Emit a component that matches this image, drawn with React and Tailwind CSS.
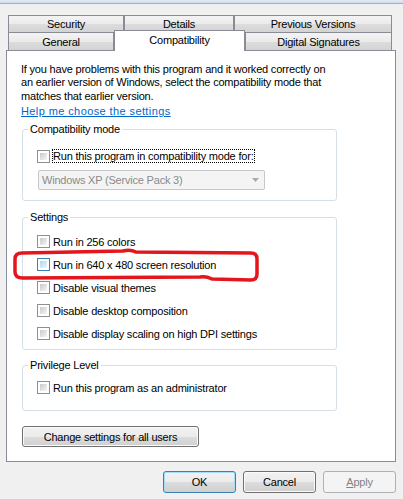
import React from 'react';

// Win7 style checkbox, the hover variant is the light blue one
function Box({ hover }) {
  return (
    <span
      className={
        'block w-[13px] h-[13px] shrink-0 border bg-white p-[2px] ' +
        (hover ? 'border-[#3c7fb1]' : 'border-[#8e8f8f]')
      }
    >
      <span
        className={
          'block w-full h-full ' +
          (hover
            ? 'bg-linear-to-br from-[#b1d6f1] to-[#e9f6fd]'
            : 'bg-linear-to-br from-[#c8cacd] to-[#f6f6f6]')
        }
      />
    </span>
  );
}

function Check({ label, hover, focus }) {
  return (
    <div className="flex items-center h-[23px] pl-[14px] gap-[2px]">
      <Box hover={hover} />
      <span
        className={
          'border leading-[12px] whitespace-nowrap ' +
          (focus ? 'border-dotted border-black' : 'border-transparent')
        }
      >
        {label}
      </span>
    </div>
  );
}

function Group({ title, className, children }) {
  return (
    <fieldset
      className={
        'ml-[15px] w-[315px] border border-[#d5dfe5] rounded-[3px] ' + className
      }
    >
      <legend className="ml-[5px] px-[2px] leading-[14px]">{title}</legend>
      {children}
    </fieldset>
  );
}

function Button({ children, className = '', kind }) {
  let look =
    'border-[#707070] bg-[linear-gradient(#f2f2f2,#ebebeb_50%,#dddddd_51%,#cfcfcf)] shadow-[inset_0_0_0_1px_#fbfbfb]';
  if (kind === 'default')
    look =
      'border-[#3c7fb1] bg-[linear-gradient(#f2f2f2,#ebebeb_50%,#dddddd_51%,#cfcfcf)] shadow-[inset_0_0_0_1px_#a9dcf6]';
  if (kind === 'disabled')
    look = 'border-[#adb2b5] bg-[#f4f4f4] text-[#838383]';
  return (
    <div
      className={
        'flex items-center justify-center border rounded-[3px] leading-[14px] ' +
        look +
        ' ' +
        className
      }
    >
      {children}
    </div>
  );
}

const tab =
  'flex justify-center border border-b-0 border-[#898c95] bg-[linear-gradient(#f3f3f3,#ebebeb_50%,#dddddd_51%,#d3d3d3)]';

export default function App() {
  return (
    <div className="relative w-[403px] h-[499px] overflow-hidden bg-[#f0f0f0] text-[11px] tracking-[-0.2px] text-black font-['Liberation_Sans',Arial,sans-serif]">
      <div className="h-[4px] bg-linear-to-b from-[#e3ebf5] to-[#cfdcec] border-b border-[#9fb1c9]" />

      {/* tabs */}
      <div className="pl-[8px] pt-[11px]">
        <div className="flex h-[17px]">
          <div className={tab + ' w-[116px] leading-[16px]'}>Security</div>
          <div className={tab + ' w-[110px] leading-[16px]'}>Details</div>
          <div className={tab + ' w-[158px] leading-[16px]'}>Previous Versions</div>
        </div>
        <div className="flex items-end h-[18px]">
          <div className={tab + ' w-[106px] h-[18px] leading-[16px] pt-[1px]'}>General</div>
          <div className="relative z-10 top-[1px] flex justify-center w-[131px] h-[21px] border border-b-0 border-[#898c95] bg-white pt-[2px] leading-[14px]">
            Compatibility
          </div>
          <div className={tab + ' w-[147px] h-[18px] leading-[16px] pt-[1px]'}>Digital Signatures</div>
        </div>
      </div>

      {/* page */}
      <div className="ml-[6px] w-[390px] h-[412px] border border-[#898c95] bg-white">
        <p className="pl-[14px] pt-[12px] leading-[13.4px] whitespace-nowrap">
          If you have problems with this program and it worked correctly on
          <br />
          an earlier version of Windows, select the compatibility mode that
          <br />
          matches that earlier version.
        </p>
        <div className="pl-[14px] mt-[1px] leading-[14px]">
          <span className="text-[#0066cc] underline tracking-[0.4px]">Help me choose the settings</span>
        </div>

        <Group title="Compatibility mode" className="mt-[4px] pt-[12px] pb-[10px]">
          <div className="flex items-center h-[16px] pl-[14px] gap-[2px]">
            <Box />
            <span className="border border-dotted border-black leading-[12px] whitespace-nowrap">
              Run this program in compatibility mode for:
            </span>
          </div>
          <div className="ml-[15px] mt-[6px] w-[227px] h-[20px] flex items-center pl-[3px] pr-[5px] border border-[#c5c7ca] rounded-[2px] bg-[#f4f4f4] text-[#8a8a8a]">
            <span>Windows XP (Service Pack 3)</span>
            <svg className="ml-auto" width="7" height="4" viewBox="0 0 7 4">
              <path d="M0 0h7L3.5 4z" fill="#a9a9a9" />
            </svg>
          </div>
        </Group>

        <Group title="Settings" className="mt-[9px] pt-[6px] pb-[4px]">
          <Check label="Run in 256 colors" />
          <Check label="Run in 640 x 480 screen resolution" hover />
          <Check label="Disable visual themes" />
          <Check label="Disable desktop composition" />
          <Check label="Disable display scaling on high DPI settings" />
        </Group>

        <Group title="Privilege Level" className="mt-[8px] pt-[4px] pb-[11px]">
          <Check label="Run this program as an administrator" />
        </Group>

        <Button className="ml-[15px] mt-[15px] w-[177px] h-[21px]">
          Change settings for all users
        </Button>
      </div>

      {/* dialog buttons */}
      <div className="flex justify-end gap-[7px] pr-[7px] mt-[9px]">
        <Button kind="default" className="w-[73px] h-[22px]">OK</Button>
        <Button className="w-[73px] h-[22px]">Cancel</Button>
        <Button kind="disabled" className="w-[73px] h-[22px]">
          <span>
            <span className="underline">A</span>pply
          </span>
        </Button>
      </div>

      {/* red marker drawn around the 640x480 option */}
      <svg
        className="absolute left-0 top-0 pointer-events-none"
        width="403"
        height="499"
        viewBox="0 0 403 499"
      >
        <path
          d="M22 253 Q15 253 15 259 L15 272 Q15 278 23 278 L200 277 Q206 276 212 279 L251 280 Q257 280 257 274 L257 259 Q257 253 251 253 L136 252 Q130 249 123 251 Z"
          fill="none"
          stroke="#e4161d"
          strokeWidth="3.5"
          strokeLinejoin="round"
        />
      </svg>
    </div>
  );
}
